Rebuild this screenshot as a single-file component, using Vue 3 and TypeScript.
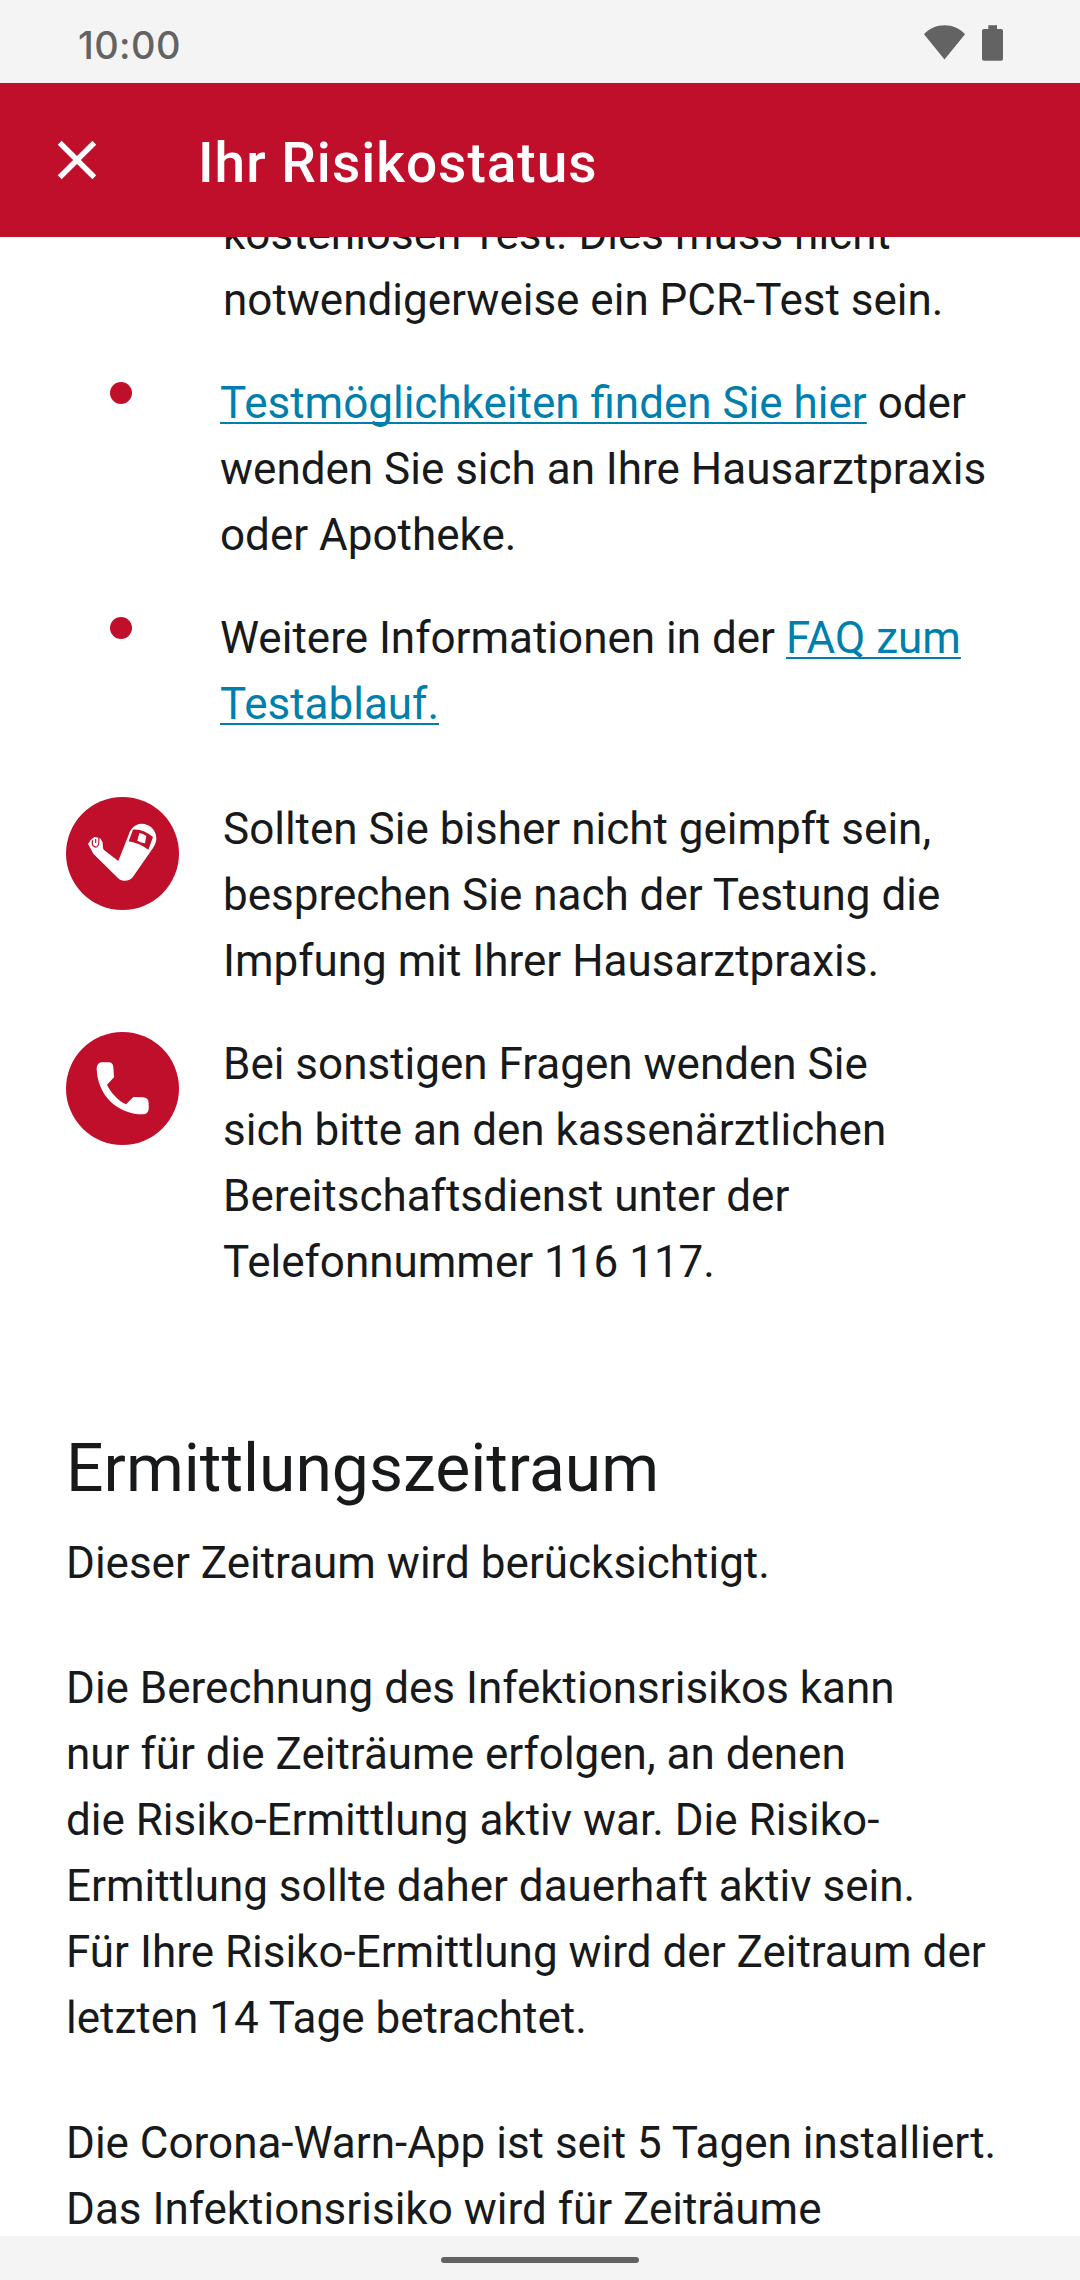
<script setup lang="ts">
interface Advice {
  icon: 'arm' | 'phone'
  lines: string[]
}

const advice: Advice[] = [
  {
    icon: 'arm',
    lines: [
      'Sollten Sie bisher nicht geimpft sein,',
      'besprechen Sie nach der Testung die',
      'Impfung mit Ihrer Hausarztpraxis.',
    ],
  },
  {
    icon: 'phone',
    lines: [
      'Bei sonstigen Fragen wenden Sie',
      'sich bitte an den kassenärztlichen',
      'Bereitschaftsdienst unter der',
      'Telefonnummer 116 117.',
    ],
  },
]

const calculation: string[] = [
  'Die Berechnung des Infektionsrisikos kann',
  'nur für die Zeiträume erfolgen, an denen',
  'die Risiko-Ermittlung aktiv war. Die Risiko-',
  'Ermittlung sollte daher dauerhaft aktiv sein.',
  'Für Ihre Risiko-Ermittlung wird der Zeitraum der',
  'letzten 14 Tage betrachtet.',
]

const installed: string[] = [
  'Die Corona-Warn-App ist seit 5 Tagen installiert.',
  'Das Infektionsrisiko wird für Zeiträume',
]
</script>

<template>
  <div class="screen">
    <div class="status-bar">
      <span class="clock">10:00</span>
      <div class="status-icons">
        <svg class="wifi" viewBox="0 0 41 35" width="41" height="35">
          <path d="M0 9.2C5.600 3.400 12.600 0.300 20.500 0.300S35.400 3.400 41 9.200L20.500 34.500Z" />
        </svg>
        <svg class="battery" viewBox="0 0 21 36" width="21" height="36">
          <path d="M6.300 4V0.200H15V4H19Q21 4 21 6V33.700Q21 35.700 19 35.700H2Q0 35.700 0 33.700V6Q0 4 2 4Z" />
        </svg>
      </div>
    </div>

    <header class="app-bar">
      <svg class="close" viewBox="0 0 24 24" width="66" height="66">
        <path d="M19 6.410L17.590 5 12 10.590 6.410 5 5 6.410 10.590 12 5 17.590 6.410 19 12 13.410 17.590 19 19 17.590 13.410 12z" />
      </svg>
      <h1>Ihr Risikostatus</h1>
    </header>

    <main class="content">
      <p class="continued">kostenlosen Test. Dies muss nicht<br />notwendigerweise ein PCR-Test sein.</p>

      <ul class="bullets">
        <li>
          <span class="dot"></span>
          <p><a>Testmöglichkeiten finden Sie hier</a> oder<br />wenden Sie sich an Ihre Hausarztpraxis<br />oder Apotheke.</p>
        </li>
        <li>
          <span class="dot"></span>
          <p>Weitere Informationen in der <a>FAQ zum<br />Testablauf.</a></p>
        </li>
      </ul>

      <div class="advice-list">
        <div v-for="item in advice" :key="item.icon" class="advice">
          <svg class="badge" viewBox="0 0 339 339" width="113" height="113">
            <circle class="disc" cx="169.500" cy="169.500" r="169.500" />
            <g v-if="item.icon === 'arm'" transform="translate(-48 -51)">
              <path
                class="glyph"
                d="M114 192L122 180L133 171L145 173L152 176L158 188L159 205L162 210L205 243L236 164C241 146 256 131 274 131C300 131 319 151 319 175C319 186 315 195 309 204L249 290C240 304 219 306 206 296L130 221L122 206Z"
              />
              <path class="cut" d="M249 149C270 147 292 157 309 171L295 209C278 196 258 188 236 184Z" />
              <path class="glyph" d="M268 159Q279 160 289 168L285 190Q273 189 262 182Z" />
              <path class="line" d="M129 181Q124 188 129 197Q136 204 142 199Q149 192 146 172" />
              <path class="line" d="M137 177V189" />
            </g>
            <g v-else transform="translate(-48 -51)">
              <path
                class="glyph"
                d="M154 142H176Q189 142 190 156L192 187L171 209C184 235 204 256 228 268L250 246L278 247Q296 248 296 264V283Q294 298 279 298C199 297 141 238 140 158Q142 144 154 142Z"
              />
            </g>
          </svg>
          <p><template v-for="(line, i) in item.lines" :key="i"><br v-if="i > 0" />{{ line }}</template></p>
        </div>
      </div>

      <section class="period">
        <h2>Ermittlungszeitraum</h2>
        <p class="subtitle">Dieser Zeitraum wird berücksichtigt.</p>
        <p><template v-for="(line, i) in calculation" :key="i"><br v-if="i > 0" />{{ line }}</template></p>
        <p><template v-for="(line, i) in installed" :key="i"><br v-if="i > 0" />{{ line }}</template></p>
      </section>
    </main>

    <div class="nav-bar"><span class="handle"></span></div>
  </div>
</template>

<style>
body {
  margin: 0;
}
</style>

<style scoped>
.screen {
  display: flex;
  flex-direction: column;
  width: 1080px;
  height: 2280px;
  overflow: hidden;
  background: #fff;
  color: #17191a;
  font-family: Roboto, sans-serif;
  font-size: 44px;
  line-height: 66px;
}

p,
h1,
h2,
ul {
  margin: 0;
  padding: 0;
  white-space: nowrap;
}

.status-bar {
  flex: none;
  display: flex;
  align-items: center;
  justify-content: space-between;
  box-sizing: border-box;
  height: 83px;
  padding: 3px 77px 0 78px;
  background: #f4f4f4;
}

.clock {
  margin-top: 4px;
  color: #636363;
  font-family: Inter, sans-serif;
  font-size: 38px;
  font-weight: 500;
  letter-spacing: 0.4px;
  line-height: 44px;
}

.status-icons {
  display: flex;
  gap: 17px;
  fill: #636363;
}

.app-bar {
  flex: none;
  display: flex;
  align-items: center;
  box-sizing: border-box;
  height: 154px;
  padding-left: 44px;
  background: #c00f2b;
  color: #fff;
}

.close {
  fill: #fff;
}

h1 {
  margin: 6px 0 0 88px;
  font-size: 55px;
  font-weight: 500;
  letter-spacing: 1px;
}

.content {
  flex: 1;
  min-height: 0;
  overflow: hidden;
}

.continued {
  margin: -36px 0 0 223px;
}

.bullets {
  display: flex;
  flex-direction: column;
  gap: 37px;
  margin-top: 37px;
  list-style: none;
}

.bullets li {
  display: flex;
  align-items: flex-start;
  padding-left: 110px;
}

.dot {
  width: 22px;
  height: 22px;
  margin: 12px 88px 0 0;
  border-radius: 50%;
  background: #c00f2b;
}

a {
  color: #007fad;
  text-decoration: underline;
  text-decoration-skip-ink: none;
  text-decoration-thickness: 2px;
  text-underline-offset: 4px;
}

.advice-list {
  display: flex;
  flex-direction: column;
  gap: 37px;
  margin-top: 59px;
}

.advice {
  display: flex;
  align-items: flex-start;
  gap: 44px;
  padding-left: 66px;
}

.badge {
  flex: none;
  margin-top: 1px;
}

.disc,
.cut {
  fill: #c00f2b;
}

.glyph {
  fill: #fff;
}

.line {
  fill: none;
  stroke: #c00f2b;
  stroke-width: 3.5;
}

.period {
  padding: 135px 0 0 66px;
}

h2 {
  font-size: 66px;
  font-weight: 400;
  line-height: 77px;
}

.subtitle {
  margin-top: 23px;
}

.subtitle ~ p {
  margin-top: 59px;
}

.nav-bar {
  flex: none;
  display: flex;
  align-items: center;
  justify-content: center;
  box-sizing: border-box;
  height: 44px;
  padding-top: 4px;
  background: #f4f4f4;
}

.handle {
  width: 198px;
  height: 6px;
  border-radius: 3px;
  background: #636363;
}
</style>
